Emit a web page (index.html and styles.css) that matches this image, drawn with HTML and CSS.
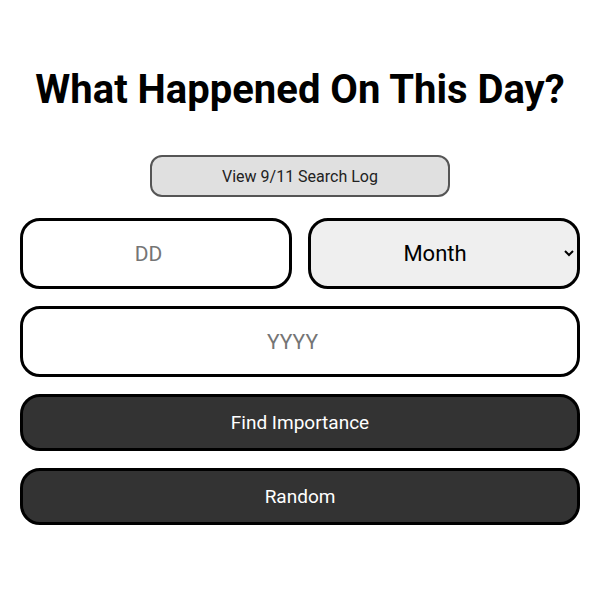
FILE: index.html
```html
<!DOCTYPE html>
<html>
<head>
<meta charset="utf-8">
<link rel="stylesheet" href="styles.css">
</head>
<body>
<main class="page">
  <h1 class="title">What Happened On This Day?</h1>
  <button class="log-btn">View 9/11 Search Log</button>
  <div class="form">
    <div class="row">
      <input class="field" type="text" placeholder="DD">
      <select class="field select">
        <option>Month</option>
      </select>
    </div>
    <input class="field" type="text" placeholder="YYYY">
    <button class="action">Find Importance</button>
    <button class="action">Random</button>
  </div>
</main>
</body>
</html>
```
FILE: styles.css
```css
* { box-sizing: border-box; }
body {
  margin: 0;
  background: #fff;
  font-family: Roboto, "Liberation Sans", sans-serif;
}
.page {
  width: 560px;
  margin: 0 auto;
  display: flex;
  flex-direction: column;
  align-items: center;
  padding-top: 65px;
}
.title {
  margin: 0;
  font-size: 40px;
  font-weight: 700;
  line-height: 50px;
  color: #000;
}
.log-btn {
  margin-top: 40px;
  width: 300px;
  height: 42px;
  background: #e0e0e0;
  border: 2px solid #555;
  border-radius: 12px;
  font-family: inherit;
  font-size: 16px;
  color: #222;
}
.form {
  margin-top: 21px;
  width: 100%;
  display: flex;
  flex-direction: column;
  gap: 17px;
}
.row {
  display: grid;
  grid-template-columns: 1fr 1fr;
  gap: 16px;
}
.field {
  width: 100%;
  height: 71px;
  border: 3px solid #000;
  border-radius: 20px;
  background: #fff;
  font-family: inherit;
  font-size: 21px;
  text-align: center;
  color: #000;
  outline: none;
  padding: 0 15px 0 0;
}
.field::placeholder { color: #757575; }
.select {
  background: #efefef;
  text-align-last: center;
  font-size: 22px;
  padding: 0 6px 0 0;
}
.action {
  height: 57px;
  background: #333;
  border: 3px solid #000;
  border-radius: 20px;
  color: #fff;
  font-family: inherit;
  font-size: 19px;
}
```
